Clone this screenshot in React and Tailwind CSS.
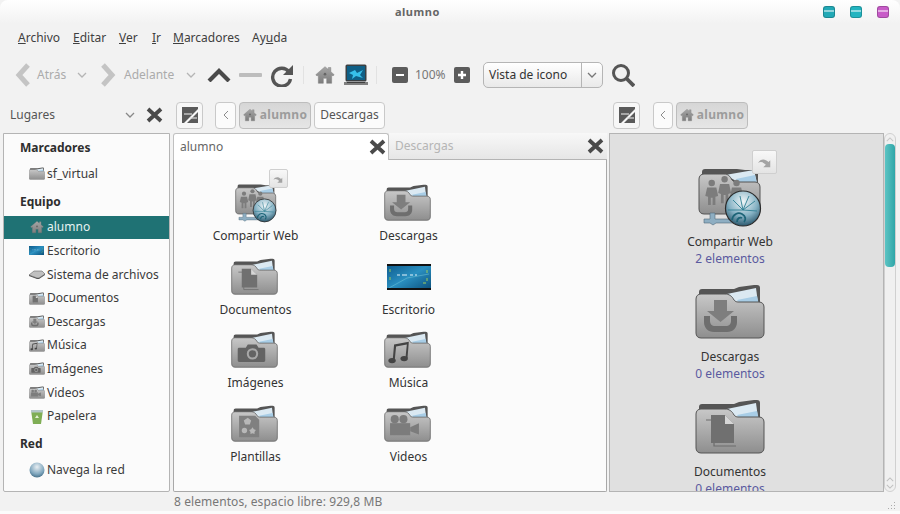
import React from 'react';

const Glyph = ({ name }) => {
  const fill = '#6e6e6e';
  if (name === 'download') {
    return (
      <g fill={fill}>
        <path d="M19 16h13v11h7L25.5 38 12 27h7z" fill="#7e7e7e" />
        <path d="M9 32h6v5c0 3 2 5 5 5h11c3 0 5-2 5-5v-5h6v6c0 6-4 10-10 10H19c-6 0-10-4-10-10z" />
      </g>
    );
  }
  if (name === 'doc') {
    return (
      <g>
        <path d="M11 21h8v26h22" fill="none" stroke="#6c6c6c" strokeWidth="1.2" />
        <path d="M16 16h14l9 9v19H16z" fill="#707070" />
        <path d="M30 16l9 9h-9z" fill="#d6d6d6" />
      </g>
    );
  }
  if (name === 'camera') {
    return (
      <g transform="translate(-3 -4)">
        <path d="M15 29h10l3-5h13l3 5h8c1 0 2 1 2 2v17c0 1-1 2-2 2H15c-1 0-2-1-2-2V31c0-1 1-2 2-2z" fill="#636363" />
        <circle cx="35" cy="38" r="8.5" fill="#a8a8a8" />
        <circle cx="35" cy="38" r="5.5" fill="#636363" />
      </g>
    );
  }
  if (name === 'music') {
    return (
      <g fill="#444" transform="translate(-11 -3)">
        <path d="M26 23l22-4-2 24h-3l2-20-16 3-2 20h-3z" />
        <ellipse cx="23" cy="47" rx="5.5" ry="4" />
        <ellipse cx="41" cy="44" rx="5.5" ry="4" />
      </g>
    );
  }
  if (name === 'template') {
    return (
      <g fill="#808080" transform="translate(-3 -4)">
        <path d="M15 20h24l6 6v26H15z" />
        <g fill="#b8b8b8">
          <path d="M28 23l5 4-2 6h-7l-2-6z" />
          <circle cx="23" cy="42" r="4" />
          <path d="M35 37l2 3 3 1-2 3 0 3-3-1-3 1 0-3-2-3 3-1z" />
        </g>
      </g>
    );
  }
  if (name === 'video') {
    return (
      <g fill="#7c7c7c" transform="translate(-5 -5)">
        <circle cx="21" cy="26" r="6" />
        <circle cx="34" cy="26" r="6" />
        <path d="M14 32h30v18H14z" />
        <path d="M44 38l13-6v17l-13-5z" />
      </g>
    );
  }
  if (name === 'people') {
    return (
      <g fill="#7c7c7c">
        <circle cx="16" cy="25" r="3.5" />
        <path d="M11 30h10l2 9-3 1v9h-3v-8h-2v8h-3v-9l-3-1z" />
        <circle cx="30" cy="21" r="3.5" />
        <path d="M25 26h10l2 10-3 1v10h-3v-9h-2v9h-3V37l-3-1z" />
        <circle cx="43" cy="25" r="3.5" />
        <path d="M38 30h10l2 9-3 1v9h-3v-8h-2v8h-3v-9l-3-1z" />
      </g>
    );
  }
  return null;
};

const Folder = ({ glyph, className }) => (
  <svg viewBox="0 0 70 55" className={className}>
    <defs>
      <linearGradient id="folderFront" x1="0" y1="0" x2="0" y2="1">
        <stop offset="0" stopColor="#c8c8c8" />
        <stop offset="1" stopColor="#8e8e8e" />
      </linearGradient>
    </defs>
    <path d="M4 13V8c0-2 1-3 3-3h32l5-2 15-2h3c2 0 3 1 3 3v16H4z" fill="#555" />
    <path d="M27 11l34-7 2 15H44z" fill="#dbe9f2" />
    <path d="M42 16l20-4 2 9H46z" fill="#a8cde6" />
    <path
      d="M1 15c0-3 2-5 5-5h24c4 0 7 2 9 6 1 1 2 2 4 2h21c3 0 5 2 5 5v26c0 3-2 5-5 5H6c-3 0-5-2-5-5z"
      fill="url(#folderFront)"
      stroke="#555"
      strokeWidth="1"
    />
    <Glyph name={glyph} />
  </svg>
);

const ShareIcon = ({ className }) => (
  <svg viewBox="0 0 64 58" className={className}>
    <defs>
      <radialGradient id="shareGlobe" cx="0.5" cy="0.3" r="0.75">
        <stop offset="0" stopColor="#f0f6f8" />
        <stop offset="0.55" stopColor="#86b2c4" />
        <stop offset="1" stopColor="#1d4a60" />
      </radialGradient>
      <linearGradient id="shareFront" x1="0" y1="0" x2="0" y2="1">
        <stop offset="0" stopColor="#c8c8c8" />
        <stop offset="1" stopColor="#8e8e8e" />
      </linearGradient>
    </defs>
    <path d="M4 8V3c0-2 1-3 3-3h32l8 1h10c2 0 3 1 3 3v12H4z" fill="#555" />
    <path d="M27 6l29-5 3 13H42z" fill="#dbe9f2" />
    <path d="M38 10l19-4 2 9H42z" fill="#a8cde6" />
    <path
      d="M1 10c0-3 2-5 5-5h20c4 0 6 2 8 6 1 1 2 2 4 2h19c3 0 5 2 5 5v22c0 3-2 5-5 5H6c-3 0-5-2-5-5z"
      fill="url(#shareFront)"
      stroke="#555"
      strokeWidth="1"
    />
    <g transform="translate(-1 -9) scale(0.92)">
      <Glyph name="people" />
    </g>
    <path d="M12 44h5v6h18v4H18l-3 2-3-2H6v-4h6z" fill="#8eaec2" stroke="#50697a" strokeWidth="0.6" />
    <circle cx="45" cy="39.5" r="17.5" fill="url(#shareGlobe)" stroke="#2b2b2b" strokeWidth="1.2" />
    <path d="M34 51c1-6 6-8 10-6s4 6 2 8M39 53c0-4 3-5 5-4" fill="none" stroke="#1d6477" strokeWidth="1.8" />
    <path d="M45 41l-10-10M45 41l-3-14M45 41l6-14M45 41l12-9M45 41l14 1M45 41l-15 0" stroke="#2f7f93" strokeWidth="0.9" />
  </svg>
);

const LinkBadge = ({ className, iconClass }) => (
  <div className={`absolute flex items-center justify-center rounded-[2px] border border-[#cfcfcf] bg-gradient-to-b from-[#f8f8f8] to-[#e4e4e4] ${className}`}>
    <svg viewBox="0 0 20 16" className={iconClass}>
      <path d="M2 9c3-5 8-5 12-1l2-2v8h-8l3-3c-3-3-6-4-9-2z" fill="#a3a3a3" />
    </svg>
  </div>
);

const DesktopThumb = ({ className, bars = true }) => (
  <svg viewBox="0 0 44 26" preserveAspectRatio="none" className={className}>
    <defs>
      <linearGradient id="deskBg" x1="0" y1="0" x2="1" y2="1">
        <stop offset="0" stopColor="#0d5a8c" />
        <stop offset="0.5" stopColor="#2a8fc0" />
        <stop offset="1" stopColor="#0b4f7a" />
      </linearGradient>
    </defs>
    <rect width="44" height="26" fill="url(#deskBg)" />
    <path d="M2 24L20 14l22-4" fill="none" stroke="#5fb4cf" strokeWidth="0.7" />
    <path d="M10 11h3M15 11h5M23 11h3M28 11h2" stroke="#e6f4fa" strokeWidth="1" />
    <path d="M3 5v3M3 13v3M40 6v3M40 14v3M36 19h3" stroke="#9ccb5c" strokeWidth="1" />
    {bars && <rect width="44" height="2" fill="#111" />}
    {bars && <rect y="24" width="44" height="2" fill="#111" />}
  </svg>
);

const HomeIcon = ({ className }) => (
  <svg viewBox="0 0 24 24" className={className}>
    <defs>
      <linearGradient id="homeFill" x1="0" y1="0" x2="0" y2="1">
        <stop offset="0" stopColor="#a6a6a6" />
        <stop offset="1" stopColor="#7c7c7c" />
      </linearGradient>
    </defs>
    <path d="M12 2l4 3.4V3h3v5l4 3.6-1.4 1.6L20 12v10h-6v-6h-4v6H4V12l-1.6 1.2L1 11.6z" fill="url(#homeFill)" stroke="#777" strokeWidth="0.5" />
    <circle cx="12" cy="11" r="1.6" fill="#666" />
  </svg>
);

const ComputerIcon = () => (
  <svg viewBox="0 0 24 22" className="w-[24px] h-[22px] ml-[9px]">
    <rect x="1.5" y="0.5" width="21" height="17" rx="1.5" fill="#3a3f42" />
    <rect x="3" y="2" width="18" height="14" fill="#0f5f86" />
    <path d="M5 9l6-3 2 3 6-3-3 5 3 3-7-2-4 3 1-4z" fill="#37c0ea" />
    <path d="M0 18h24v3H0z" fill="#7f7f7f" />
    <path d="M3 18h18v1H3z" fill="#3f3f3f" />
  </svg>
);

const ChevronSmall = ({ color = '#9a9a9a', className = 'w-[10px] h-[6px]' }) => (
  <svg viewBox="0 0 10 6" className={className}>
    <path d="M1 1l4 4 4-4" fill="none" stroke={color} strokeWidth="1.3" />
  </svg>
);

const CloseIcon = ({ className = 'w-[17px] h-[16px]' }) => (
  <svg viewBox="0 0 17 16" className={className}>
    <path d="M2 2l13 12M15 2L2 14" stroke="#4a4a4a" strokeWidth="3.8" />
  </svg>
);

const SplitButton = () => (
  <div className="w-[27px] h-[27px] rounded-[4px] border border-[#c9c9c9] bg-[#f7f7f7] flex items-center justify-center shrink-0">
    <svg viewBox="0 0 18 18" className="w-[18px] h-[18px]">
      <path d="M1 1h16v2L3 17H1z" fill="#5a5a5a" />
      <path d="M17 6v11H6z" fill="#5a5a5a" />
      <path d="M3 8h8" stroke="#dcdcdc" strokeWidth="1.2" />
      <path d="M9 12h7" stroke="#dcdcdc" strokeWidth="1.2" />
    </svg>
  </div>
);

const BackCrumb = ({ className }) => (
  <div className={`h-[27px] rounded-[4px] border border-[#c9c9c9] bg-[#fbfbfb] flex items-center justify-center shrink-0 ${className}`}>
    <svg viewBox="0 0 6 10" className="w-[6px] h-[10px]">
      <path d="M5 1L1 5l4 4" fill="none" stroke="#8c8c8c" strokeWidth="1" />
    </svg>
  </div>
);

const HomeCrumb = () => (
  <div className="w-[72px] h-[27px] rounded-[4px] border border-[#bdbdbd] bg-gradient-to-b from-[#d6d6d6] to-[#e6e6e6] flex items-center justify-center gap-[3px] shrink-0">
    <HomeIcon className="w-[14px] h-[14px]" />
    <span className="font-bold text-[12px] tracking-[0.3px] text-[#9c9c9c]">alumno</span>
  </div>
);

const sidebarSections = [
  { title: 'Marcadores', items: [{ label: 'sf_virtual', icon: 'folder' }] },
  {
    title: 'Equipo',
    items: [
      { label: 'alumno', icon: 'home', selected: true },
      { label: 'Escritorio', icon: 'desktop' },
      { label: 'Sistema de archivos', icon: 'drive' },
      { label: 'Documentos', icon: 'doc' },
      { label: 'Descargas', icon: 'download' },
      { label: 'Música', icon: 'music' },
      { label: 'Imágenes', icon: 'camera' },
      { label: 'Videos', icon: 'video' },
      { label: 'Papelera', icon: 'trash' },
    ],
  },
  { title: 'Red', items: [{ label: 'Navega la red', icon: 'globe' }] },
];

const SidebarIcon = ({ icon }) => {
  if (icon === 'home') return <HomeIcon className="w-[14px] h-[14px]" />;
  if (icon === 'desktop') return <DesktopThumb bars={false} className="w-[15px] h-[9px]" />;
  if (icon === 'drive') {
    return (
      <svg viewBox="0 0 16 9" className="w-[16px] h-[9px]">
        <path d="M5 1h8l3 3-6 4-2 0-8-3z" fill="#c0c0c0" stroke="#666" strokeWidth="0.6" />
        <path d="M0 5l8 3 2 0 6-4v1l-6 4H8L0 6z" fill="#555" />
      </svg>
    );
  }
  if (icon === 'trash') {
    return (
      <svg viewBox="0 0 12 15" className="w-[12px] h-[15px]">
        <path d="M0 1h12l-2 14H2z" fill="#7fae55" />
        <path d="M0 1h12v2.5H0z" fill="#b4c6c8" />
        <path d="M6 6l2 3H4z" fill="#e4f0d4" />
      </svg>
    );
  }
  if (icon === 'globe') {
    return (
      <svg viewBox="0 0 16 16" className="w-[16px] h-[16px]">
        <defs>
          <radialGradient id="sideGlobe" cx="0.5" cy="0.3" r="0.8">
            <stop offset="0" stopColor="#e8eef2" />
            <stop offset="0.6" stopColor="#7fa6bd" />
            <stop offset="1" stopColor="#2f5a74" />
          </radialGradient>
        </defs>
        <circle cx="8" cy="8" r="7.5" fill="url(#sideGlobe)" />
      </svg>
    );
  }
  return <Folder glyph={icon === 'folder' ? null : icon} className="w-[16px] h-[13px]" />;
};

const SidebarRow = ({ item }) => (
  <div className={`h-[23.6px] flex items-center ${item.selected ? 'bg-[#1f7274] text-[#e6f2f2]' : 'text-[#3a3a3a]'}`}>
    <div className="w-[42px] pl-[23px] flex justify-center shrink-0">
      <SidebarIcon icon={item.icon} />
    </div>
    <span className="ml-[1px]">{item.label}</span>
  </div>
);

const gridItems = [
  { label: 'Compartir Web', share: true },
  { label: 'Descargas', glyph: 'download' },
  { label: 'Documentos', glyph: 'doc' },
  { label: 'Escritorio', desktop: true },
  { label: 'Imágenes', glyph: 'camera' },
  { label: 'Música', glyph: 'music' },
  { label: 'Plantillas', glyph: 'template' },
  { label: 'Videos', glyph: 'video' },
];

const GridCell = ({ item }) => (
  <div className="h-[73.7px] flex flex-col items-center">
    <div className="relative h-[50px] w-[60px] shrink-0 flex items-end justify-center">
      {item.share && <ShareIcon className="w-[42px] h-[41px] mb-[2px]" />}
      {item.share && <LinkBadge className="top-[-7px] right-[-2px] w-[19px] h-[19px]" iconClass="w-[13px] h-[10px]" />}
      {item.glyph && <Folder glyph={item.glyph} className="w-[47px] h-[37px] mb-[5px] mr-[2px]" />}
      {item.desktop && <DesktopThumb className="w-[44px] h-[26px] mb-[10px]" />}
    </div>
    <span className="text-[#333] leading-[17px] mt-[1px]">{item.label}</span>
  </div>
);

const rightItems = [
  { label: 'Compartir Web', sub: '2 elementos', share: true },
  { label: 'Descargas', sub: '0 elementos', glyph: 'download' },
  { label: 'Documentos', sub: '0 elementos', glyph: 'doc' },
];

const RightCell = ({ item }) => (
  <div className="h-[115px] w-full flex flex-col items-center shrink-0">
    <div className="relative h-[76px] w-[80px] shrink-0 flex items-end justify-center">
      {item.share && <ShareIcon className="w-[64px] h-[58px]" />}
      {item.share && <LinkBadge className="top-[-1px] right-[-7px] w-[25px] h-[24px]" iconClass="w-[18px] h-[14px]" />}
      {item.glyph && <Folder glyph={item.glyph} className="w-[70px] h-[55px] mb-[3px]" />}
    </div>
    <span className="text-[#333] leading-[16px] mt-[7px]">{item.label}</span>
    <span className="text-[#5a5a9f] leading-[16px] mt-[0.5px]">{item.sub}</span>
  </div>
);

const WinDot = ({ color }) => (
  <div className={`w-[12px] h-[12px] rounded-[3px] border border-black/20 ${color} flex flex-col pt-[3px]`}>
    <div className="h-[2px] bg-white/50" />
  </div>
);

export default function App() {
  return (
    <div className="w-[900px] h-[514px] overflow-hidden flex flex-col bg-[#f2f2f2] text-[12px] font-['Noto_Sans',sans-serif] text-[#3a3a3a]">
      {/* Title bar */}
      <div className="h-[24px] shrink-0 flex items-center relative pl-[395px] bg-gradient-to-b from-white to-[#f2f2f2] rounded-t-[8px]">
        <span className="font-bold text-[11px] tracking-[0.5px] text-[#666]">alumno</span>
        <div className="absolute right-[11px] top-[6px] flex gap-[15px]">
          <WinDot color="bg-[#22a9b6]" />
          <WinDot color="bg-[#22b4c0]" />
          <WinDot color="bg-[#c85cc8]" />
        </div>
      </div>

      {/* Menu */}
      <div className="h-[27px] shrink-0 flex items-center pl-[18px] text-[#404040]">
        <span className="w-[55px]"><u>A</u>rchivo</span>
        <span className="w-[46px]"><u>E</u>ditar</span>
        <span className="w-[33px]"><u>V</u>er</span>
        <span className="w-[21px]"><u>I</u>r</span>
        <span className="w-[79px]"><u>M</u>arcadores</span>
        <span>Ay<u>u</u>da</span>
      </div>

      {/* Toolbar */}
      <div className="h-[48px] shrink-0 flex items-center pl-[15px]">
        <svg viewBox="0 0 16 24" className="w-[16px] h-[24px]"><path d="M13 2L4 12l9 10" fill="none" stroke="#c4c4c4" strokeWidth="5" /></svg>
        <span className="ml-[6px] w-[40px] text-[#ababab]">Atrás</span>
        <ChevronSmall color="#b5b5b5" />
        <svg viewBox="0 0 16 24" className="w-[16px] h-[24px] ml-[13px]"><path d="M3 2l9 10-9 10" fill="none" stroke="#c4c4c4" strokeWidth="5" /></svg>
        <span className="ml-[8px] w-[62px] text-[#ababab]">Adelante</span>
        <ChevronSmall color="#b5b5b5" />
        <svg viewBox="0 0 24 14" className="w-[24px] h-[14px] ml-[11px]"><path d="M2 13L12 3l10 10" fill="none" stroke="#4a4a4a" strokeWidth="4.2" /></svg>
        <div className="w-[23px] h-[4px] ml-[8px] bg-[#bdbdbd] rounded-[1px]" />
        <svg viewBox="0 0 24 24" className="w-[24px] h-[24px] ml-[8px]">
          <path d="M19 9a9 9 0 1 0 1.5 7" fill="none" stroke="#555" strokeWidth="3.4" />
          <path d="M23 2v10H13z" fill="#555" />
        </svg>
        <div className="w-px h-[18px] ml-[9px] bg-[#e2e2e2]" />
        <HomeIcon className="w-[20px] h-[20px] ml-[11px]" />
        <ComputerIcon />
        <div className="w-px h-[18px] ml-[8px] bg-[#e2e2e2]" />
        <div className="ml-[15px] w-[16px] h-[16px] rounded-[2px] bg-[#5c5c5c] flex items-center justify-center">
          <div className="w-[8px] h-[2px] bg-white" />
        </div>
        <span className="ml-[7px] w-[39px] text-[#777]">100%</span>
        <div className="w-[16px] h-[16px] rounded-[2px] bg-[#5c5c5c] flex items-center justify-center text-white">
          <svg viewBox="0 0 10 10" className="w-[10px] h-[10px]"><path d="M5 1v8M1 5h8" stroke="#fff" strokeWidth="2.4" /></svg>
        </div>
        <div className="ml-[13px] w-[120px] h-[26px] rounded-[5px] border border-[#b5b5b5] bg-gradient-to-b from-white to-[#e9e9e9] flex items-center">
          <span className="flex-1 pl-[5px] text-[#333]">Vista de icono</span>
          <div className="w-[21px] h-full border-l border-[#b5b5b5] flex items-center justify-center">
            <ChevronSmall color="#777" />
          </div>
        </div>
        <svg viewBox="0 0 24 24" className="w-[24px] h-[24px] ml-[8px]">
          <circle cx="10" cy="10" r="7.5" fill="none" stroke="#555" strokeWidth="3" />
          <path d="M15.5 15.5L23 23" stroke="#555" strokeWidth="3.8" />
        </svg>
      </div>

      {/* Pane headers */}
      <div className="h-[32px] shrink-0 flex items-center">
        <div className="w-[173px] shrink-0 flex items-center pl-[10px]">
          <span className="w-[115px] text-[#555]">Lugares</span>
          <ChevronSmall color="#888" />
          <CloseIcon className="w-[17px] h-[16px] ml-[11px]" />
        </div>
        <div className="ml-[3px] flex items-center">
          <SplitButton />
          <BackCrumb className="w-[21px] ml-[12px]" />
          <div className="ml-[3px]"><HomeCrumb /></div>
          <div className="ml-[3px] w-[71px] h-[27px] rounded-[4px] border border-[#c9c9c9] bg-[#fbfbfb] flex items-center justify-center text-[#555]">Descargas</div>
        </div>
        <div className="ml-[228px] flex items-center">
          <SplitButton />
          <BackCrumb className="w-[20px] ml-[13px]" />
          <div className="ml-[3px]"><HomeCrumb /></div>
        </div>
      </div>

      {/* Body */}
      <div className="h-[359px] mt-[2px] shrink-0 flex pl-[3px]">
        {/* Sidebar */}
        <div className="w-[167px] shrink-0 h-full border border-[#b4b4b4] rounded-b-[2px] bg-[#fbfbfb] pt-[1px]">
          {sidebarSections.map((section, i) => (
            <div key={section.title}>
              <div className={`h-[26px] pl-[16px] flex items-center font-bold text-[#2e2e2e] mb-[1px] ${i > 0 ? 'mt-[3px]' : ''}`}>{section.title}</div>
              {section.items.map((item) => <SidebarRow key={item.label} item={item} />)}
            </div>
          ))}
        </div>

        {/* Center pane */}
        <div className="ml-[3px] w-[434px] shrink-0 flex flex-col">
          <div className="h-[27px] flex shrink-0">
            <div className="w-[216px] rounded-t-[3px] border border-b-0 border-[#c0c0c0] bg-white flex items-center pl-[6px] pr-[2px] text-[#666]">
              <span className="flex-1">alumno</span>
              <CloseIcon />
            </div>
            <div className="flex-1 border-b border-[#b4b4b4] bg-gradient-to-b from-[#f8f8f8] to-[#e6e6e6] flex items-center pl-[6px] pr-[3px] text-[#b5b5b5]">
              <span className="flex-1">Descargas</span>
              <CloseIcon />
            </div>
          </div>
          <div className="flex-1 border border-t-0 border-[#a8a8a8] rounded-b-[2px] bg-[#fbfbfb] pt-[16px] pl-[5px]">
            <div className="grid grid-cols-[153px_153px]">
              {gridItems.map((item) => <GridCell key={item.label} item={item} />)}
            </div>
          </div>
        </div>

        {/* Right pane */}
        <div className="ml-[2px] w-[275px] shrink-0 h-full border border-[#b4b4b4] bg-[#e0e0e0] overflow-hidden flex flex-col pt-[17px] pr-[33px]">
          {rightItems.map((item) => <RightCell key={item.label} item={item} />)}
        </div>

        {/* Scrollbar */}
        <div className="w-[12px] shrink-0 h-full rounded-[6px] border border-[#d0d0d0] bg-[#f0f0f0] flex flex-col items-center">
          <div className="h-[10px] flex items-center">
            <ChevronSmall color="#c8c8c8" className="w-[8px] h-[5px] rotate-180" />
          </div>
          <div className="w-[10px] h-[123px] rounded-[4px] bg-gradient-to-r from-[#5cc4c4] to-[#2ea6a8]" />
          <div className="mt-auto flex flex-col gap-[2px] pb-[2px]">
            <ChevronSmall color="#c0c0c0" className="w-[8px] h-[5px] rotate-180" />
            <ChevronSmall color="#c0c0c0" className="w-[8px] h-[5px]" />
          </div>
        </div>
      </div>

      {/* Status bar */}
      <div className="flex-1 flex items-center pl-[174px] pt-px text-[#777] tracking-[0.08px] relative">
        <span>8 elementos, espacio libre: 929,8 MB</span>
        <div className="absolute right-[5px] bottom-[2px] grid grid-cols-3 gap-[2px]">
          <div className="w-px h-px" /><div className="w-px h-px" /><div className="w-px h-px bg-[#aaa]" />
          <div className="w-px h-px" /><div className="w-px h-px bg-[#aaa]" /><div className="w-px h-px bg-[#aaa]" />
          <div className="w-px h-px bg-[#aaa]" /><div className="w-px h-px bg-[#aaa]" /><div className="w-px h-px bg-[#aaa]" />
        </div>
      </div>
      <div className="h-[3px] shrink-0 bg-[#fbfbfb]" />
    </div>
  );
}
